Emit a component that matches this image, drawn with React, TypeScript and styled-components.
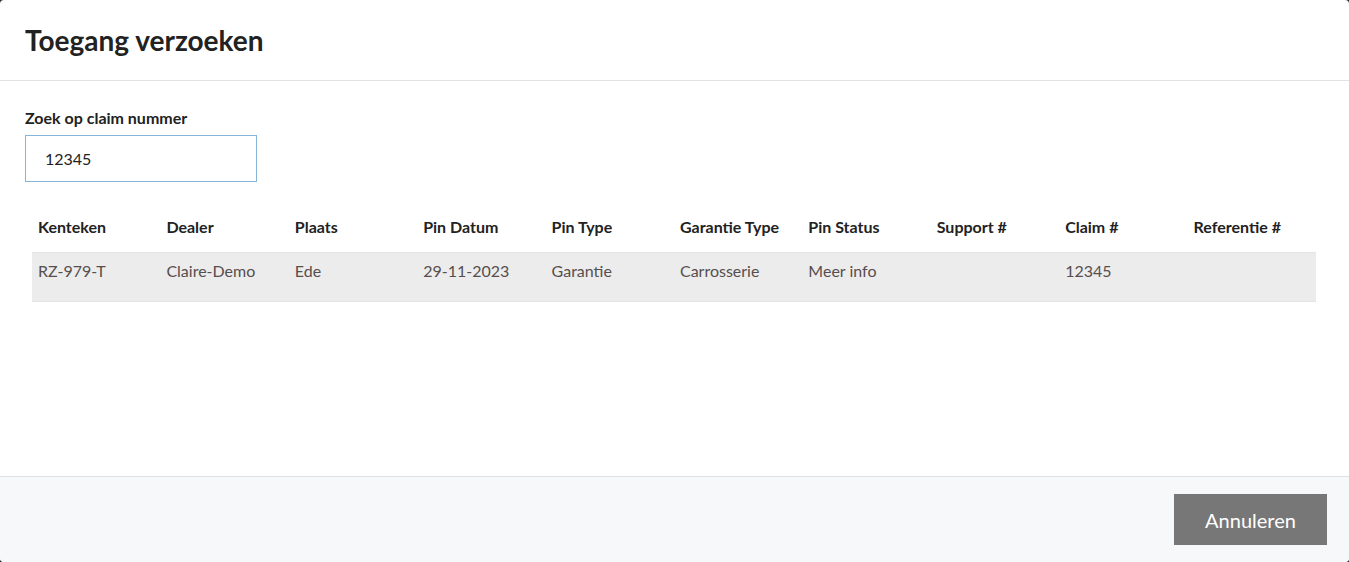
import styled, { createGlobalStyle } from "styled-components";

const GlobalStyle = createGlobalStyle`
  html, body {
    margin: 0;
    padding: 0;
    background: #2b2b2b;
    font-family: Lato, "Liberation Sans", sans-serif;
  }
`;

const Modal = styled.div`
  width: 1349px;
  height: 562px;
  background: #fff;
  border-radius: 4px;
  display: flex;
  flex-direction: column;
  overflow: hidden;
`;

const Header = styled.div`
  height: 81px;
  flex-shrink: 0;
  box-sizing: border-box;
  padding: 0 25px 1px;
  display: flex;
  align-items: center;
  border-bottom: 1px solid #e2e2e2;
`;

const Title = styled.h2`
  margin: 0;
  font-size: 28px;
  font-weight: 700;
  color: #222;
`;

const Body = styled.div`
  flex: 1;
  padding: 27px 25px 0;
`;

const Label = styled.label`
  display: block;
  font-size: 16px;
  line-height: 19px;
  font-weight: 700;
  color: #222;
  margin-bottom: 8px;
`;

const Input = styled.input`
  display: block;
  width: 232px;
  height: 47px;
  box-sizing: border-box;
  border: 1px solid #86b5d8;
  padding: 0 19px;
  font-family: Lato, "Liberation Sans", sans-serif;
  font-size: 16px;
  color: #222;
  outline: none;
`;

const Table = styled.table`
  margin: 24px 0 0 7px;
  width: 1284px;
  border-collapse: collapse;
  table-layout: fixed;
`;

const Th = styled.th`
  text-align: left;
  font-size: 16px;
  font-weight: 700;
  color: #222;
  padding: 0 6px 6px;
  height: 40px;
  vertical-align: middle;
`;

const Row = styled.tr`
  background: #ececec;
  border-top: 1px solid #e4e4e4;
  border-bottom: 1px solid #e4e4e4;
`;

const Td = styled.td`
  font-size: 16px;
  color: #574e4e;
  padding: 8px 6px 0;
  height: 40px;
  vertical-align: top;
`;

const Footer = styled.div`
  height: 86px;
  flex-shrink: 0;
  box-sizing: border-box;
  border-top: 1px solid #e0e0e0;
  background: #f7f8fa;
  display: flex;
  justify-content: flex-end;
  padding: 17px 22px 0 0;
`;

const Button = styled.button`
  width: 153px;
  height: 51px;
  border: none;
  background: #777;
  color: #fff;
  font-family: Lato, "Liberation Sans", sans-serif;
  font-size: 20px;
  cursor: pointer;
`;

const columns = [
  "Kenteken",
  "Dealer",
  "Plaats",
  "Pin Datum",
  "Pin Type",
  "Garantie Type",
  "Pin Status",
  "Support #",
  "Claim #",
  "Referentie #",
];

const rows = [
  [
    "RZ-979-T",
    "Claire-Demo",
    "Ede",
    "29-11-2023",
    "Garantie",
    "Carrosserie",
    "Meer info",
    "",
    "12345",
    "",
  ],
];

function App() {
  return (
    <>
      <GlobalStyle />
      <Modal>
        <Header>
          <Title>Toegang verzoeken</Title>
        </Header>
        <Body>
          <Label htmlFor="claim">Zoek op claim nummer</Label>
          <Input id="claim" type="text" defaultValue="12345" />
          <Table>
            <thead>
              <tr>
                {columns.map((col) => (
                  <Th key={col}>{col}</Th>
                ))}
              </tr>
            </thead>
            <tbody>
              {rows.map((row, i) => (
                <Row key={i}>
                  {row.map((cell, j) => (
                    <Td key={j}>{cell}</Td>
                  ))}
                </Row>
              ))}
            </tbody>
          </Table>
        </Body>
        <Footer>
          <Button>Annuleren</Button>
        </Footer>
      </Modal>
    </>
  );
}

export default App;
